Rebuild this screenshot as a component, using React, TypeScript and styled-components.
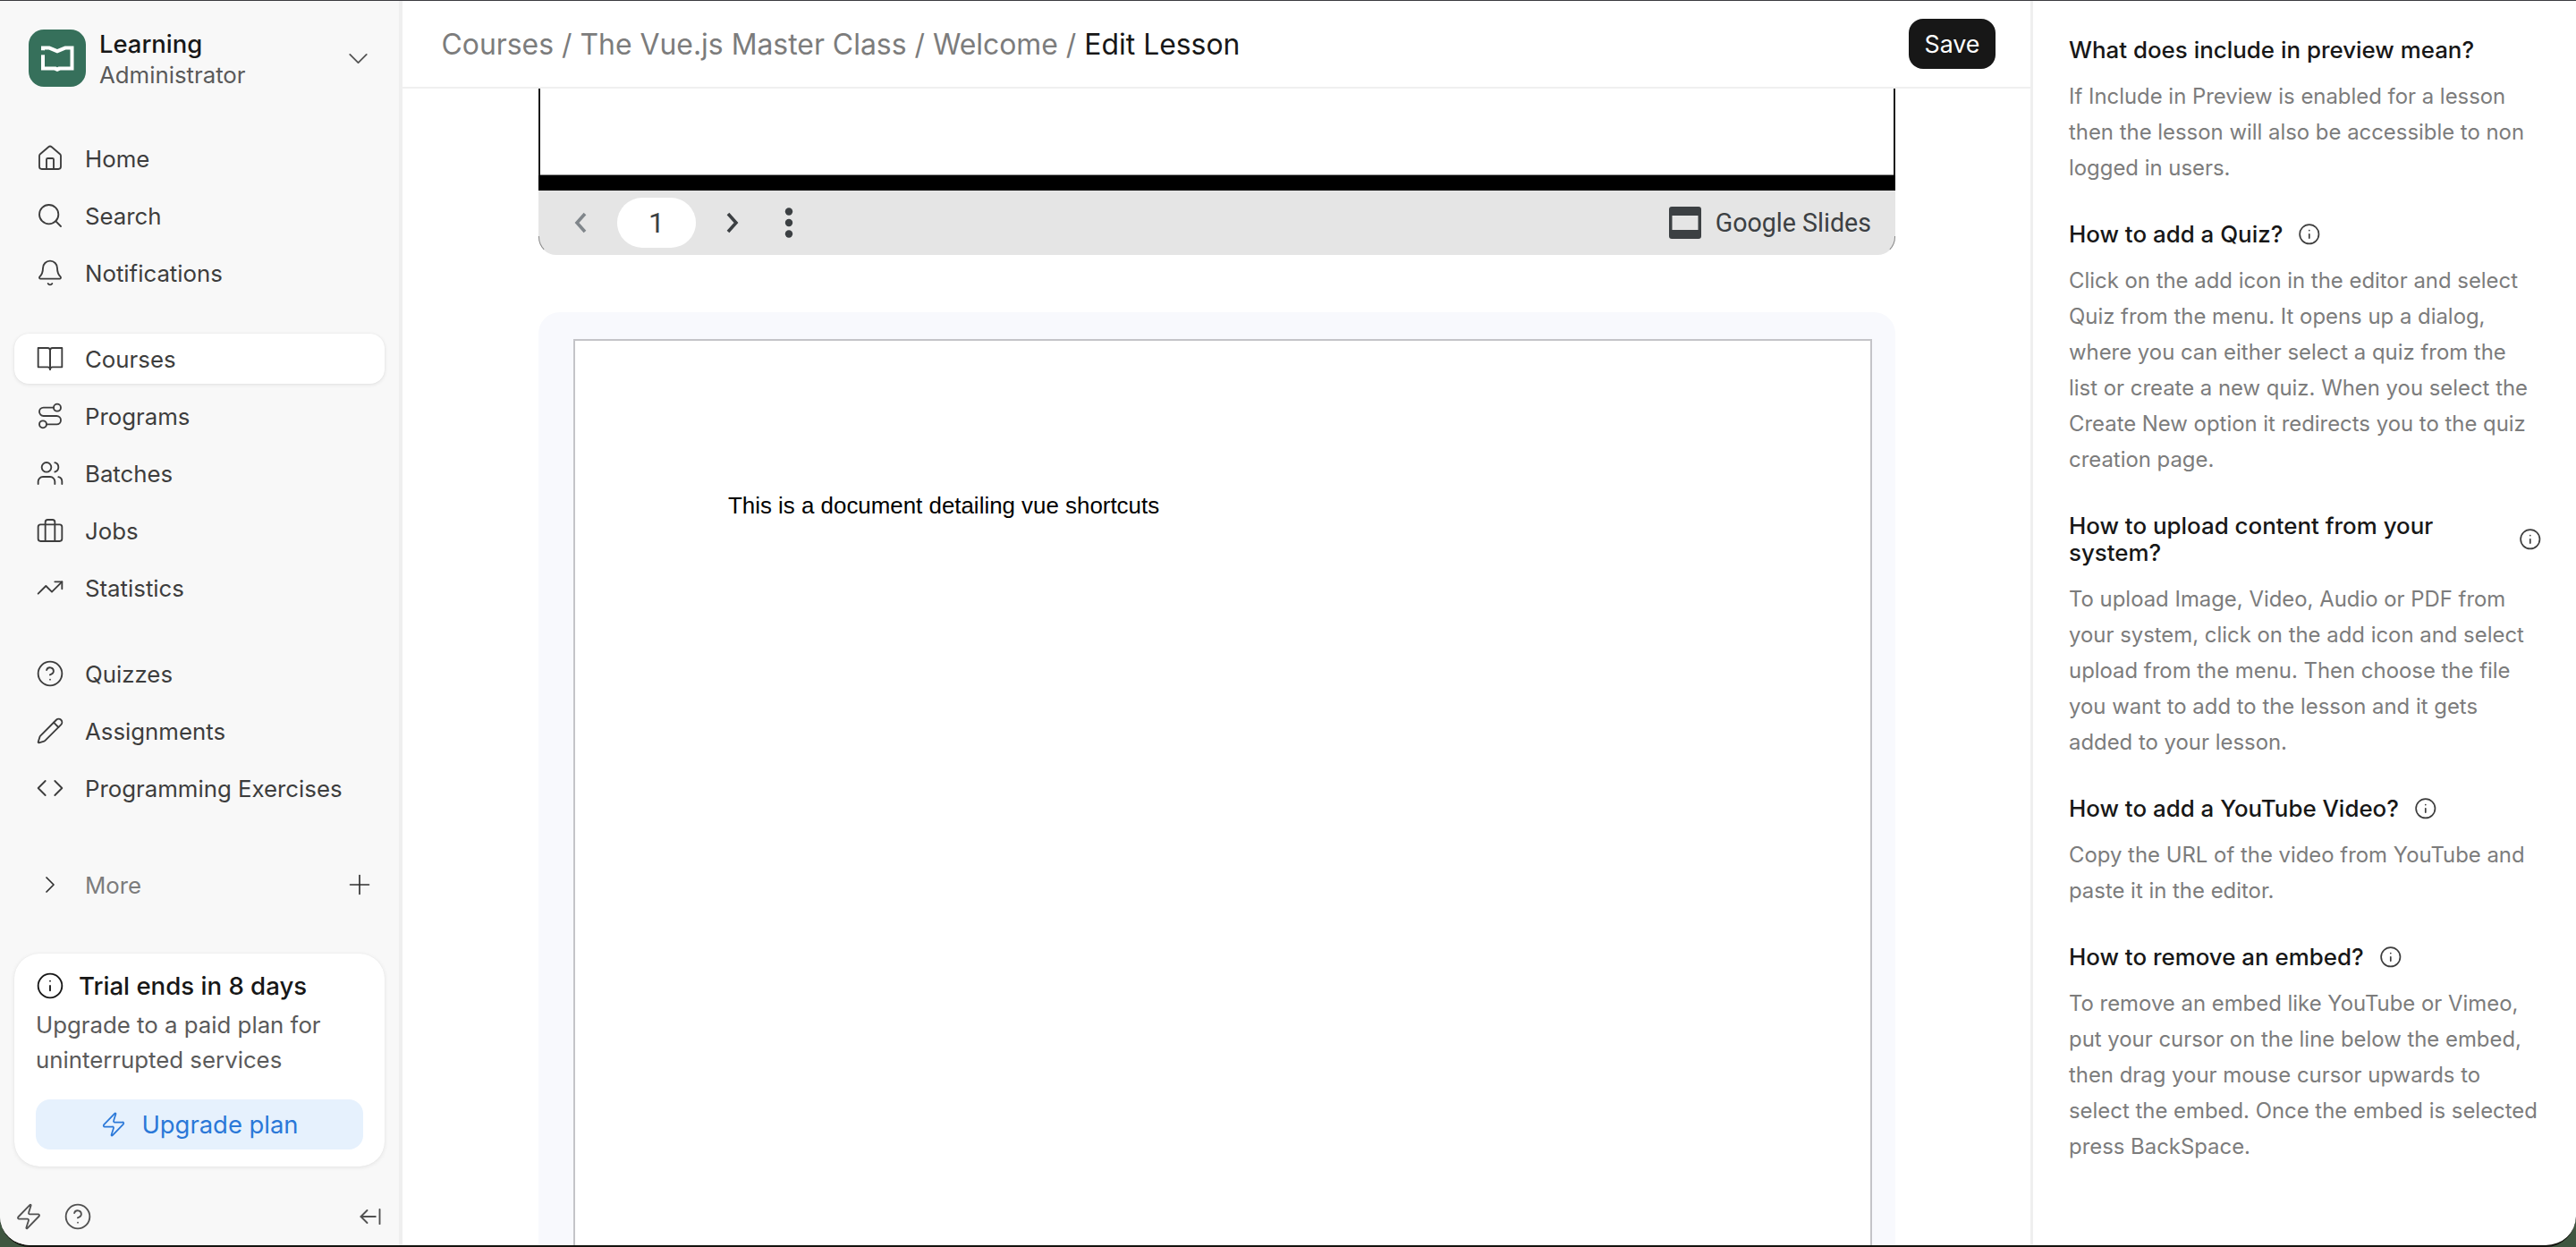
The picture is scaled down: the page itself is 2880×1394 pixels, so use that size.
import React from "react";
import styled, { createGlobalStyle } from "styled-components";
import {
  House, Search, Bell, Route, Users, TrendingUp, CircleHelp, Pencil, Code,
  ChevronDown, ChevronRight, Plus, Info, Zap, ArrowLeftFromLine,
} from "lucide-react";

const Global = createGlobalStyle`
  * { box-sizing: border-box; }
  html, body { margin: 0; padding: 0; height: 100%; overflow: hidden; background: #3f5640; }
  body { font-family: Inter, "Noto Sans", sans-serif; font-size: 25.8px; color: #171717; }
`;

const Desktop = styled.div`
  width: 2880px;
  height: 1394px;
  overflow: hidden;
  background: #3f5640;
`;

const Window = styled.div`
  width: 2880px;
  height: 1394px;
  display: flex;
  background: #fff;
  border-top: 1px solid #3b3b40;
  border-bottom: 2px solid #14140f;
  border-radius: 0 0 34px 34px;
  overflow: hidden;
`;

/* ---------- sidebar ---------- */
const Sidebar = styled.aside`
  width: 450px;
  flex: none;
  display: flex;
  flex-direction: column;
  padding: 0 16px;
  background: #f8f8f8;
  border-right: 4px solid #efefef;
`;

const Brand = styled.div`
  display: flex;
  align-items: center;
  height: 64px;
  margin-top: 32px;
  padding: 0 11px 0 16px;
  color: #555;
`;

const BrandText = styled.div`
  display: flex;
  flex-direction: column;
  margin-left: 15px;
  flex: 1;
`;

const BrandName = styled.span`
  font-size: 27.4px;
  font-weight: 500;
  line-height: 35px;
  margin-top: 2px;
  color: #171717;
`;

const BrandRole = styled.span`
  font-size: 25.8px;
  line-height: 33px;
  color: #5a5a5a;
`;

const NavGroup = styled.nav<{ $gap: number }>`
  display: flex;
  flex-direction: column;
  gap: 8px;
  margin-top: ${(p) => p.$gap}px;
`;

const NavRow = styled.div<{ $active?: boolean }>`
  display: flex;
  align-items: center;
  gap: 23px;
  height: 56px;
  padding-left: 24px;
  border-radius: 16px;
  color: #3d3d3d;
  background: ${(p) => (p.$active ? "#fff" : "transparent")};
  box-shadow: ${(p) => (p.$active ? "0 1px 4px rgba(0,0,0,.1), 0 0 1px rgba(0,0,0,.08)" : "none")};
  & > svg { flex: none; }
`;

const MoreRow = styled.div`
  display: flex;
  align-items: center;
  height: 56px;
  margin-top: 52px;
  padding: 0 10px 0 24px;
  color: #7c7c7c;
  & > svg { color: #2f2f2f; flex: none; }
`;

const MoreLabel = styled.span`
  flex: 1;
  margin-left: 23px;
`;

const ChevronSlot = styled.span`
  width: 32px;
  display: flex;
  justify-content: center;
  color: #2f2f2f;
`;

const TrialCard = styled.section`
  margin-top: auto;
  height: 238px;
  padding: 19px 24px 0;
  border-radius: 28px;
  background: #fff;
  box-shadow: 0 1px 5px rgba(0,0,0,.09), 0 0 1px rgba(0,0,0,.06);
`;

const TrialHead = styled.div`
  display: flex;
  align-items: center;
  gap: 16px;
  font-size: 27.6px;
  font-weight: 500;
  line-height: 34px;
  color: #171717;
`;

const TrialDesc = styled.p`
  margin: 7px 0 0;
  line-height: 39px;
  color: #5a5a5a;
`;

const UpgradeButton = styled.div`
  display: flex;
  align-items: center;
  justify-content: center;
  gap: 16px;
  height: 56px;
  margin-top: 25px;
  border-radius: 16px;
  background: #e6f1fd;
  color: #2a78d8;
  font-size: 27.4px;
`;

const SideFooter = styled.div`
  display: flex;
  align-items: center;
  gap: 23px;
  height: 56px;
  margin: 28px 0 4px;
  padding: 0 2px 0 0;
  color: #525252;
`;

const FooterEnd = styled.span`
  margin-left: auto;
  display: flex;
`;

/* ---------- main ---------- */
const Main = styled.main`
  width: 1823px;
  flex: none;
  display: flex;
  flex-direction: column;
  border-right: 3px solid #efefef;
`;

const TopBar = styled.header`
  height: 98px;
  flex: none;
  display: flex;
  align-items: center;
  justify-content: space-between;
  padding: 0 39px 0 43.5px;
  border-bottom: 2px solid #f0f0f0;
`;

const Crumbs = styled.div`
  font-size: 31.9px;
  color: #7c7c7c;
  white-space: pre;
`;

const CrumbCurrent = styled.span`
  color: #171717;
`;

const SaveButton = styled.button`
  width: 97px;
  height: 56px;
  border: 0;
  border-radius: 16px;
  background: #171717;
  color: #fff;
  font: 400 26.8px Inter, sans-serif;
`;

const Scroll = styled.div`
  flex: 1;
  min-height: 0;
  overflow: hidden;
  padding: 0 151px 0 152px;
`;

const EmbedFrame = styled.div`
  display: flex;
  flex-direction: column;
`;

const SlideArea = styled.div`
  height: 97px;
  background: #fff;
  border: solid #1a1a1a;
  border-width: 0 2px;
  box-shadow: inset 0 -1px 0 #8a8a8a;
`;

const BlackBand = styled.div`
  height: 17px;
  background: #000;
`;

const SlidesToolbar = styled.div`
  position: relative;
  height: 72px;
  display: flex;
  align-items: center;
  padding: 0 27px 0 39px;
  background: #e5e5e5;
  border-radius: 0 0 20px 20px;
  color: #3c4043;
  font-family: Roboto, sans-serif;
  &::before, &::after {
    content: "";
    position: absolute;
    bottom: 0;
    width: 20px;
    height: 20px;
    border-bottom: 1px solid transparent;
  }
  &::before {
    left: 0;
    border-left: 1px solid #888;
    border-bottom-left-radius: 20px;
  }
  &::after {
    right: 0;
    border-right: 1px solid #888;
    border-bottom-right-radius: 20px;
  }
`;

const PagePill = styled.div`
  width: 88px;
  height: 56px;
  margin: 0 33px;
  border-radius: 28px;
  background: #fff;
  display: flex;
  align-items: center;
  justify-content: center;
  font-size: 32px;
  color: #3c4043;
`;

const DotsIcon = styled.svg`
  margin-left: 50px;
`;

const SlidesBrand = styled.div`
  margin-left: auto;
  display: flex;
  align-items: center;
  gap: 16px;
  font-size: 28.6px;
`;

const DocCard = styled.section`
  margin-top: 64px;
  height: 1500px;
  padding: 30px 26px 0 39px;
  border-radius: 24px;
  background: #f8f9fd;
`;

const DocPage = styled.div`
  height: 1400px;
  padding: 169px 0 0 171px;
  background: #fff;
  border: 2px solid #c4c4c8;
  font-family: "Liberation Sans", Arial, sans-serif;
  font-size: 25.9px;
  line-height: 30px;
  color: #000;
`;

/* ---------- help panel ---------- */
const HelpPanel = styled.aside`
  flex: 1;
  min-width: 0;
  display: flex;
  flex-direction: column;
  gap: 39px;
  padding: 40px 38px 0 40px;
`;

const HelpItem = styled.div`
  display: flex;
  flex-direction: column;
  gap: 17px;
`;

const HelpHeading = styled.h3`
  display: flex;
  align-items: center;
  gap: 17px;
  margin: 0;
  font-size: 25.9px;
  font-weight: 500;
  line-height: 30px;
  color: #171717;
  & > svg { flex: none; color: #3d3d3d; }
`;

const HelpBody = styled.p`
  margin: 0;
  max-width: 525px;
  font-size: 23.9px;
  line-height: 40px;
  color: #7c7c7c;
`;

/* ---------- drawn icons ---------- */
const LogoMark = () => (
  <svg width="64" height="64" viewBox="0 0 64 64" style={{ flex: "none" }}>
    <rect width="64" height="64" rx="17" fill="#36705b" />
    <path d="M14 18.5H23.5L32 22L40.5 18.5H50.5V45.5H35.5L32 47L28.5 45.5H14V28.5H17.5V23.5H14Z" fill="#fff" />
    <path d="M18 22.5H22.5L32 26.5L41.5 22.5H46.5V41.5H33.5L32 42.2L30.5 41.5H18V28.5H14V23.5H18Z" fill="#36705b" />
    <path d="M14 28.5H18V41.5H14Z" fill="#fff" />
  </svg>
);

const SquareBook = () => (
  <svg width="32" height="32" viewBox="0 0 24 24" fill="none" stroke="currentColor" strokeWidth="1.4" strokeLinejoin="round" strokeLinecap="round">
    <path d="M2 3h8a2 2 0 0 1 2 2v16a2 2 0 0 0-2-2H2z" />
    <path d="M22 3h-8a2 2 0 0 0-2 2v16a2 2 0 0 1 2-2h8z" />
  </svg>
);

const Case = () => (
  <svg width="32" height="32" viewBox="0 0 24 24" fill="none" stroke="currentColor" strokeWidth="1.4" strokeLinejoin="round" strokeLinecap="round">
    <rect x="2" y="7" width="20" height="14" rx="2" />
    <path d="M16 21V5a2 2 0 0 0-2-2h-4a2 2 0 0 0-2 2v16" />
  </svg>
);

const ArrowLeft = () => (
  <svg width="16" height="24" viewBox="0 0 16 24" fill="none" stroke="#80868b" strokeWidth="3.6">
    <path d="M13 2L4 12l9 10" />
  </svg>
);

const ArrowRight = () => (
  <svg width="16" height="24" viewBox="0 0 16 24" fill="none" stroke="#3c4043" strokeWidth="3.6">
    <path d="M3 2l9 10-9 10" />
  </svg>
);

const Dots = () => (
  <DotsIcon width="10" height="34" viewBox="0 0 10 34" fill="#3c4043">
    <circle cx="5" cy="4.5" r="4.2" />
    <circle cx="5" cy="17" r="4.2" />
    <circle cx="5" cy="29.5" r="4.2" />
  </DotsIcon>
);

const SlidesMark = () => (
  <svg width="36" height="36" viewBox="0 0 36 36">
    <rect width="36" height="36" rx="3" fill="#3c4043" />
    <rect x="3.5" y="10" width="29" height="16" fill="#e5e5e5" />
  </svg>
);

const ic = { size: 32, strokeWidth: 1.4 };

const navA: [React.ReactNode, string][] = [
  [<House {...ic} />, "Home"],
  [<Search {...ic} />, "Search"],
  [<Bell {...ic} />, "Notifications"],
];
const navB: [React.ReactNode, string, boolean?][] = [
  [<SquareBook />, "Courses", true],
  [<Route {...ic} />, "Programs"],
  [<Users {...ic} />, "Batches"],
  [<Case />, "Jobs"],
  [<TrendingUp {...ic} />, "Statistics"],
];
const navC: [React.ReactNode, string][] = [
  [<CircleHelp {...ic} />, "Quizzes"],
  [<Pencil {...ic} />, "Assignments"],
  [<Code {...ic} />, "Programming Exercises"],
];

const help: { q: string; a: string; info?: boolean }[] = [
  {
    q: "What does include in preview mean?",
    a: "If Include in Preview is enabled for a lesson then the lesson will also be accessible to non logged in users.",
  },
  {
    q: "How to add a Quiz?",
    info: true,
    a: "Click on the add icon in the editor and select Quiz from the menu. It opens up a dialog, where you can either select a quiz from the list or create a new quiz. When you select the Create New option it redirects you to the quiz creation page.",
  },
  {
    q: "How to upload content from your system?",
    info: true,
    a: "To upload Image, Video, Audio or PDF from your system, click on the add icon and select upload from the menu. Then choose the file you want to add to the lesson and it gets added to your lesson.",
  },
  {
    q: "How to add a YouTube Video?",
    info: true,
    a: "Copy the URL of the video from YouTube and paste it in the editor.",
  },
  {
    q: "How to remove an embed?",
    info: true,
    a: "To remove an embed like YouTube or Vimeo, put your cursor on the line below the embed, then drag your mouse cursor upwards to select the embed. Once the embed is selected press BackSpace.",
  },
];

export default function App() {
  return (
    <Desktop>
      <Global />
      <Window>
        <Sidebar>
          <Brand>
            <LogoMark />
            <BrandText>
              <BrandName>Learning</BrandName>
              <BrandRole>Administrator</BrandRole>
            </BrandText>
            <ChevronDown size={37} strokeWidth={1.2} />
          </Brand>
          <NavGroup $gap={52}>
            {navA.map(([icon, label]) => (
              <NavRow key={label}>{icon}{label}</NavRow>
            ))}
          </NavGroup>
          <NavGroup $gap={40}>
            {navB.map(([icon, label, active]) => (
              <NavRow key={label} $active={active}>{icon}{label}</NavRow>
            ))}
          </NavGroup>
          <NavGroup $gap={40}>
            {navC.map(([icon, label]) => (
              <NavRow key={label}>{icon}{label}</NavRow>
            ))}
          </NavGroup>
          <MoreRow>
            <ChevronSlot><ChevronRight size={38} strokeWidth={1.3} /></ChevronSlot>
            <MoreLabel>More</MoreLabel>
            <Plus size={36} strokeWidth={1.1} />
          </MoreRow>
          <TrialCard>
            <TrialHead><Info size={32} strokeWidth={1.4} />Trial ends in 8 days</TrialHead>
            <TrialDesc>Upgrade to a paid plan for uninterrupted services</TrialDesc>
            <UpgradeButton><Zap size={30} strokeWidth={1.4} />Upgrade plan</UpgradeButton>
          </TrialCard>
          <SideFooter>
            <Zap size={32} strokeWidth={1.4} />
            <CircleHelp size={32} strokeWidth={1.4} />
            <FooterEnd><ArrowLeftFromLine size={28} strokeWidth={1.6} /></FooterEnd>
          </SideFooter>
        </Sidebar>

        <Main>
          <TopBar>
            <Crumbs>
              {"Courses / The Vue.js Master Class / Welcome / "}
              <CrumbCurrent>Edit Lesson</CrumbCurrent>
            </Crumbs>
            <SaveButton>Save</SaveButton>
          </TopBar>
          <Scroll>
            <EmbedFrame>
              <SlideArea />
              <BlackBand />
              <SlidesToolbar>
                <ArrowLeft />
                <PagePill>1</PagePill>
                <ArrowRight />
                <Dots />
                <SlidesBrand><SlidesMark />Google Slides</SlidesBrand>
              </SlidesToolbar>
            </EmbedFrame>
            <DocCard>
              <DocPage>This is a document detailing vue shortcuts</DocPage>
            </DocCard>
          </Scroll>
        </Main>

        <HelpPanel>
          {help.map((h) => (
            <HelpItem key={h.q}>
              <HelpHeading>
                <span>{h.q}</span>
                {h.info && <Info size={25.6} strokeWidth={1.6} />}
              </HelpHeading>
              <HelpBody>{h.a}</HelpBody>
            </HelpItem>
          ))}
        </HelpPanel>
      </Window>
    </Desktop>
  );
}
